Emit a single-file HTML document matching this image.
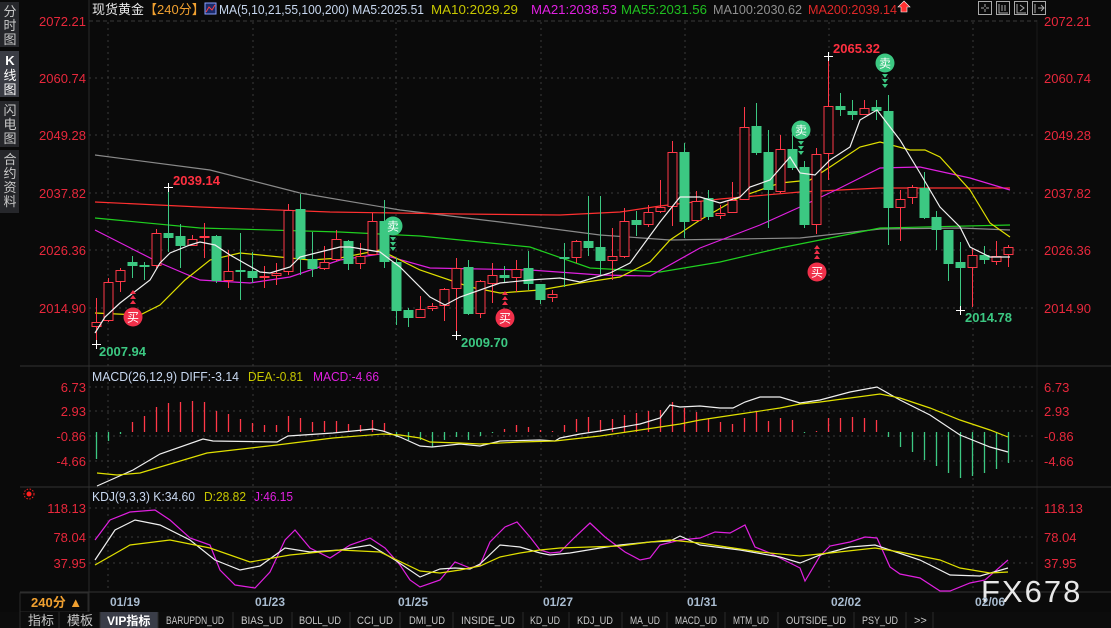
<!DOCTYPE html>
<html><head><meta charset="utf-8"><style>
html,body{margin:0;padding:0;background:#0a0a0a;width:1111px;height:628px;overflow:hidden}
svg{display:block}
text{font-family:"Liberation Sans","Noto Sans CJK SC",sans-serif}
.m{font-family:"Liberation Mono","Noto Sans CJK SC",monospace;font-size:11px;fill:#c8c8c8}
</style></head><body>
<svg id="s" width="1111" height="628" viewBox="0 0 1111 628" xmlns="http://www.w3.org/2000/svg">
<rect width="1111" height="628" fill="#0a0a0a"/>
<rect x="0" y="2" width="19" height="45" fill="#26272b"/>
<rect x="0" y="51" width="19" height="46" fill="#3a3c44"/>
<rect x="0" y="101" width="19" height="46" fill="#26272b"/>
<rect x="0" y="150" width="19" height="63" fill="#26272b"/>
<g font-size="13" fill="#c8c8c8" text-anchor="middle">
<text x="10" y="16">分</text><text x="10" y="30">时</text><text x="10" y="44">图</text>
<text x="10" y="65" fill="#fff" font-weight="bold">K</text><text x="10" y="80" fill="#fff">线</text><text x="10" y="94" fill="#fff">图</text>
<text x="10" y="115">闪</text><text x="10" y="129">电</text><text x="10" y="143">图</text>
<text x="10" y="164">合</text><text x="10" y="178">约</text><text x="10" y="192">资</text><text x="10" y="206">料</text>
</g>
<line x1="89" y1="0" x2="89" y2="612" stroke="#2a2a2a"/>
<line x1="1037" y1="20" x2="1037" y2="592" stroke="#1a1a1a"/>
<line x1="20" y1="366" x2="1111" y2="366" stroke="#333"/>
<line x1="20" y1="487" x2="1111" y2="487" stroke="#333"/>
<line x1="20" y1="592" x2="1111" y2="592" stroke="#333"/>
<g id="grid" stroke="#3a3a3a" stroke-dasharray="2,4"></g>
<line x1="89" y1="21" x2="1037" y2="21" stroke="#3a3a3a" stroke-dasharray="4,3"/>
<g font-size="13">
<text x="92" y="14" fill="#e8e8e8">现货黄金</text>
<text x="144" y="14" fill="#f0a030">【240分】</text>
<rect x="205" y="3" width="11" height="11" fill="#1a2a6a" stroke="#8aa0ff"/>
<polyline points="206,12 209,7 212,10 215,5" fill="none" stroke="#ff4040"/>
<text x="219" y="14" fill="#c8d8f0" textLength="205" lengthAdjust="spacingAndGlyphs">MA(5,10,21,55,100,200)  MA5:2025.51</text>
<text x="431" y="14" fill="#c8c800" textLength="87" lengthAdjust="spacingAndGlyphs">MA10:2029.29</text>
<text x="531" y="14" fill="#e020e0" textLength="86" lengthAdjust="spacingAndGlyphs">MA21:2038.53</text>
<text x="621" y="14" fill="#20c020" textLength="86" lengthAdjust="spacingAndGlyphs">MA55:2031.56</text>
<text x="713" y="14" fill="#909090" textLength="89" lengthAdjust="spacingAndGlyphs">MA100:2030.62</text>
<text x="808" y="14" fill="#e02828" textLength="89" lengthAdjust="spacingAndGlyphs">MA200:2039.14</text>
<path d="M904 1 L910 7 L907 7 L907 12 L901 12 L901 7 L898 7 Z" fill="#ff3030" stroke="#fff" stroke-width="0.6"/>
</g>
<g fill="none" stroke="#aaa">
<rect x="978.5" y="1.5" width="13" height="13"/><rect x="996.5" y="1.5" width="13" height="13"/><rect x="1014.5" y="1.5" width="13" height="13"/><rect x="1032.5" y="1.5" width="13" height="13"/>
<path d="M985 4v3M985 9v3M981 8h3M986 8h3M999 4v9h9M1002 5v6M1005 5v6M1017 4v9h9M1020 5l4 3-4 3M1035 4v9M1038 8h6M1041 5l3 3-3 3"/>
</g>
<g font-size="13" fill="#e8283c">
<g text-anchor="end">
<text x="86" y="26">2072.21</text><text x="86" y="83">2060.74</text><text x="86" y="140">2049.28</text><text x="86" y="198">2037.82</text><text x="86" y="255">2026.36</text><text x="86" y="313">2014.90</text>
<text x="86" y="392">6.73</text><text x="86" y="416">2.93</text><text x="86" y="441">-0.86</text><text x="86" y="466">-4.66</text>
<text x="86" y="513">118.13</text><text x="86" y="542">78.04</text><text x="86" y="568">37.95</text>
</g>
<text x="1044" y="26">2072.21</text><text x="1044" y="83">2060.74</text><text x="1044" y="140">2049.28</text><text x="1044" y="198">2037.82</text><text x="1044" y="255">2026.36</text><text x="1044" y="313">2014.90</text>
<text x="1044" y="392">6.73</text><text x="1044" y="416">2.93</text><text x="1044" y="441">-0.86</text><text x="1044" y="466">-4.66</text>
<text x="1044" y="513">118.13</text><text x="1044" y="542">78.04</text><text x="1044" y="568">37.95</text>
</g>
<g id="chart"></g>
<g font-size="13" font-weight="bold">
<text x="173" y="185" fill="#ff3040">2039.14</text>
<text x="99" y="356" fill="#3cc882">2007.94</text>
<text x="461" y="347" fill="#3cc882">2009.70</text>
<text x="833" y="53" fill="#ff3040">2065.32</text>
<text x="965" y="322" fill="#3cc882">2014.78</text>
</g>
<g id="sig"></g>
<g font-size="13">
<text x="92" y="381" fill="#c8d8f0" textLength="147" lengthAdjust="spacingAndGlyphs">MACD(26,12,9) DIFF:-3.14</text>
<text x="248" y="381" fill="#c8c800" textLength="55" lengthAdjust="spacingAndGlyphs">DEA:-0.81</text>
<text x="313" y="381" fill="#e020e0" textLength="66" lengthAdjust="spacingAndGlyphs">MACD:-4.66</text>
<text x="92" y="501" fill="#c8d8f0" textLength="103" lengthAdjust="spacingAndGlyphs">KDJ(9,3,3) K:34.60</text>
<text x="204" y="501" fill="#c8c800" textLength="42" lengthAdjust="spacingAndGlyphs">D:28.82</text>
<text x="254" y="501" fill="#e020e0" textLength="39" lengthAdjust="spacingAndGlyphs">J:46.15</text>
</g>
<circle cx="29" cy="494" r="2.5" fill="#ff2020"/>
<circle cx="29" cy="494" r="5" fill="none" stroke="#ff2020" stroke-dasharray="1.5,1.5"/>
<text x="981" y="602" font-size="31" fill="#e8e8e8" letter-spacing="2">FX678</text>
<rect x="20" y="593" width="68" height="19" fill="#0a0a0a" stroke="#2a2a2a"/>
<text x="31" y="607" font-size="13" font-weight="bold" fill="#f0a030">240分 ▲</text>
<g font-size="12" font-weight="bold" fill="#a9bcd0">
<text x="110" y="606">01/19</text><text x="255" y="606">01/23</text><text x="398" y="606">01/25</text><text x="543" y="606">01/27</text><text x="687" y="606">01/31</text><text x="831" y="606">02/02</text><text x="975" y="606">02/06</text>
</g>
<rect x="0" y="612" width="1111" height="16" fill="#0c0c0c"/>
<rect x="100" y="612" width="58" height="16" fill="#3a3d48"/>
<g stroke="#2a2a2a">
<path d="M20 612v16M59 612v16M100 612v16M158 612v16M233 612v16M292 612v16M350 612v16M400 612v16M453 612v16M523 612v16M569 612v16M622 612v16M667 612v16M725 612v16M778 612v16M854 612v16M906 612v16M933 612v16"/>
</g>
<g font-size="13" fill="#c8c8c8">
<text x="28" y="625">指标</text><text x="67" y="625">模板</text>
</g>
<text x="107" y="625" font-size="12" fill="#fff" font-weight="bold">VIP指标</text>
<g class="m">
<text x="166" y="624" textLength="58" lengthAdjust="spacingAndGlyphs">BARUPDN_UD</text>
<text x="241" y="624" textLength="42" lengthAdjust="spacingAndGlyphs">BIAS_UD</text>
<text x="299" y="624" textLength="42" lengthAdjust="spacingAndGlyphs">BOLL_UD</text>
<text x="357" y="624" textLength="36" lengthAdjust="spacingAndGlyphs">CCI_UD</text>
<text x="409" y="624" textLength="36" lengthAdjust="spacingAndGlyphs">DMI_UD</text>
<text x="461" y="624" textLength="54" lengthAdjust="spacingAndGlyphs">INSIDE_UD</text>
<text x="530" y="624" textLength="30" lengthAdjust="spacingAndGlyphs">KD_UD</text>
<text x="577" y="624" textLength="36" lengthAdjust="spacingAndGlyphs">KDJ_UD</text>
<text x="630" y="624" textLength="30" lengthAdjust="spacingAndGlyphs">MA_UD</text>
<text x="675" y="624" textLength="42" lengthAdjust="spacingAndGlyphs">MACD_UD</text>
<text x="733" y="624" textLength="36" lengthAdjust="spacingAndGlyphs">MTM_UD</text>
<text x="786" y="624" textLength="60" lengthAdjust="spacingAndGlyphs">OUTSIDE_UD</text>
<text x="862" y="624" textLength="36" lengthAdjust="spacingAndGlyphs">PSY_UD</text>
<text x="914" y="624">&gt;&gt;</text>
</g>
</svg>
<script>
var NS="http://www.w3.org/2000/svg";
function el(p,t,a){var e=document.createElementNS(NS,t);for(var k in a)e.setAttribute(k,a[k]);p.appendChild(e);return e;}
var g=document.getElementById('chart'),gr=document.getElementById('grid'),sg=document.getElementById('sig');
[78,135,193,250,308,387,411,436,461,508,537,563].forEach(function(y){el(gr,'line',{x1:89,y1:y,x2:1037,y2:y});});
[108,253,396,541,685,829,973].forEach(function(x){el(gr,'line',{x1:x,y1:22,x2:x,y2:592});});
function pl(pts,c){el(g,'polyline',{points:pts,fill:'none',stroke:c,'stroke-width':1.2});}
var R='#ff3848',G='#3cc882';
pl("95,155 210,170 300,193 400,210 500,222 600,235 670,240 800,238 880,229 960,228 1010,230",'#8a8a8a');
pl("95,202 200,207 330,212 460,214 560,215 620,212 660,206 720,199 800,192 880,188 1010,188",'#ff3030');
pl("95,218 200,228 340,232 420,236 530,247 590,268 660,272 720,262 780,248 880,228 1010,225",'#20d020');
pl("95,230 160,263 200,280 250,283 290,277 340,260 380,254 430,268 530,270 600,275 650,276 700,248 760,225 800,207 840,188 880,168 920,167 970,178 1010,190",'#e020e0');
pl("95,313 140,315 160,305 185,280 210,260 240,253 280,257 310,260 340,258 380,250 420,270 470,287 500,293 540,290 580,283 620,277 650,262 670,240 700,220 740,197 780,183 810,180 830,167 860,147 880,142 910,150 925,150 940,157 970,190 990,223 1010,237",'#e0e000');
var C=[[96,'r',322,326,298,344],[108,'r',282,320,278,322],[120,'r',270,281,268,292],[132,'g',262,265,256,278],[144,'g',265,266,262,280],[156,'r',233,265,229,268],[168,'g',233,237,187,252],[180,'g',236,245,224,268],[192,'r',239,245,235,245],[204,'r',236,237,223,258],[216,'g',236,280,235,283],[228,'r',271,280,250,288],[240,'g',270,271,233,300],[252,'g',271,277,252,283],[264,'r',276,277,266,288],[276,'r',273,275,263,285],[288,'r',210,271,204,275],[300,'g',209,258,194,275],[312,'g',259,268,232,277],[324,'r',262,268,246,270],[336,'r',239,259,230,261],[348,'g',241,263,240,270],[360,'r',256,263,243,269],[372,'r',221,254,213,255],[384,'g',221,261,200,268],[396,'g',262,310,258,325],[408,'g',310,317,308,327],[420,'r',309,317,296,317],[432,'r',306,308,303,311],[444,'r',289,305,288,321],[456,'r',268,288,258,335],[468,'g',267,313,260,315],[480,'r',281,313,280,318],[492,'r',275,283,263,303],[504,'g',275,277,266,283],[516,'r',269,277,260,292],[528,'g',268,283,251,290],[540,'g',284,299,284,304],[552,'r',294,297,290,302],[564,'g',257,258,243,287],[576,'r',241,257,240,263],[588,'g',241,247,196,256],[600,'g',247,260,196,275],[612,'r',256,260,228,280],[624,'r',221,256,208,258],[636,'g',220,224,211,236],[648,'r',212,224,205,227],[660,'r',207,211,180,213],[672,'r',152,206,141,226],[684,'g',152,221,143,238],[696,'r',201,220,191,221],[708,'g',198,216,190,220],[720,'r',213,215,205,219],[732,'r',200,212,182,213],[744,'r',127,199,107,200],[756,'g',126,152,103,155],[768,'g',152,189,130,228],[780,'r',149,191,135,193],[792,'g',149,167,130,170],[804,'g',167,224,161,228],[816,'r',154,224,148,234],[828,'r',106,153,56,180],[840,'g',106,109,93,116],[852,'g',111,114,100,120],[864,'r',108,114,100,114],[876,'g',107,110,100,120],[888,'g',111,207,95,245],[900,'r',199,207,190,241],[912,'r',187,197,185,204],[924,'g',188,217,172,219],[936,'g',217,229,211,250],[948,'g',230,263,230,281],[960,'g',262,267,242,310],[972,'r',255,267,249,307],[984,'g',255,259,246,264],[996,'r',256,261,241,265],[1008,'r',247,254,245,267]];
C.forEach(function(c){var x=c[0],col=c[1]=='r'?R:G,t=c[2],b=Math.max(c[3],c[2]+1);
el(g,'line',{x1:x+.5,y1:c[4],x2:x+.5,y2:t,stroke:col});el(g,'line',{x1:x+.5,y1:b,x2:x+.5,y2:c[5],stroke:col});
if(c[1]=='r')el(g,'rect',{x:x-4,y:t+.5,width:9,height:b-t,fill:'#0a0a0a',stroke:col});else el(g,'rect',{x:x-4.5,y:t,width:10,height:b-t+1,fill:col});});
pl("95,333 105,317 120,303 150,280 160,263 170,253 190,245 200,242 215,245 230,255 260,272 270,273 290,267 300,257 320,252 340,247 350,247 380,252 400,267 430,297 445,305 460,297 500,283 530,280 560,278 580,282 610,273 630,263 660,222 680,197 700,197 720,203 740,197 750,187 770,180 790,157 800,173 815,175 830,160 850,147 860,120 877,110 900,140 920,173 940,207 960,227 970,247 990,257 1010,257",'#f0f0f0');
[[168,187],[96,344],[456,335],[828,56],[960,310]].forEach(function(p){el(g,'path',{d:'M'+(p[0]-4)+' '+(p[1]+.5)+'h9M'+(p[0]+.5)+' '+(p[1]-4)+'v9',stroke:'#fff'});});
var M={96:-27,108:-9,120:-2,132:10,144:16,156:25,168:29,180:30,192:31,204:30,216:21,228:18,240:13,252:9,264:7,276:7,288:16,300:14,312:10,324:11,336:11,348:8,360:7,372:12,384:9,396:-5,408:-8,420:-8,432:-15,444:-8,456:-5,468:-8,480:-4,492:-1,504:3,516:7,528:5,540:2,552:1,564:7,576:13,588:15,600:12,612:13,624:17,636:19,648:21,660:22,672:30,684:24,696:20,708:14,720:10,732:8,744:14,756:20,768:11,780:14,792:12,804:-1,816:1,828:14,840:14,852:15,864:14,876:12,888:-5,900:-15,912:-20,924:-28,936:-34,948:-41,960:-46,972:-44,984:-41,996:-37,1008:-31};
for(var k in M){var v=M[k],x=+k+.5;el(g,'line',{x1:x,y1:432,x2:x,y2:432-v,stroke:v>0?R:G,'stroke-width':1.3});}
pl("97,486 133,470 160,454 203,439 213,441 277,442 288,436 333,433 373,429 383,431 400,437 420,446 432,447 460,444 480,446 500,441 540,440 555,441 560,438 580,434 600,431 640,424 660,418 670,405 680,407 700,406 720,408 733,408 745,402 760,397 780,397 800,403 820,400 850,392 877,387 900,400 930,415 960,435 990,447 1008,452",'#f0f0f0');
pl("97,473 117,475 140,473 207,453 277,445 333,438 383,434 400,435 420,438 430,442 460,443 480,444 520,442 555,441 600,436 640,430 680,424 700,420 740,414 780,408 800,404 820,402 850,398 880,394 900,398 930,408 960,420 990,430 1008,437",'#e0e000');
pl("95,540 110,520 130,512 155,510 170,520 190,538 210,545 220,570 235,585 255,588 270,572 285,540 295,530 310,548 330,558 350,545 370,538 385,548 400,565 410,580 420,587 440,580 455,562 470,568 480,565 490,542 505,527 517,522 530,537 540,550 550,553 560,552 575,537 590,523 605,537 613,543 625,552 640,560 650,558 660,545 680,540 700,538 715,532 730,533 745,525 755,547 770,553 800,568 805,581 820,556 830,546 850,542 865,537 877,538 890,567 900,574 920,578 940,591 950,591 970,583 985,580 1008,560",'#e020e0');
pl("95,560 115,530 135,520 160,525 190,540 215,560 240,570 260,566 285,548 310,552 340,550 370,545 395,560 420,577 440,569 455,568 470,569 480,564 500,545 520,547 540,553 550,555 570,553 600,548 620,545 650,542 670,541 680,536 700,545 740,550 780,557 800,563 820,555 850,547 875,545 890,550 920,560 950,575 980,576 1008,568",'#f0f0f0');
pl("95,565 130,545 170,540 210,548 250,562 290,555 340,550 380,552 420,571 440,573 460,570 480,566 500,557 520,553 540,550 560,548 590,547 620,546 650,542 670,540 700,543 760,552 800,556 830,553 875,548 900,552 940,560 960,568 990,573 1008,572",'#e0e000');
function sig(x,y,buy){var col=buy?'#f0304a':'#3cc882';
for(var i=0;i<3;i++){var ty=buy?y-13-i*5:y+11+i*5;
el(sg,'path',{d:buy?'M'+(x-3)+' '+(ty)+'L'+x+' '+(ty-4)+'L'+(x+3)+' '+ty+'Z':'M'+(x-3)+' '+ty+'L'+x+' '+(ty+4)+'L'+(x+3)+' '+ty+'Z',fill:col});}
el(sg,'circle',{cx:x,cy:y,r:9.5,fill:col});
var t=el(sg,'text',{x:x,y:y+4.5,'text-anchor':'middle','font-size':12,fill:'#fff'});t.textContent=buy?'买':'卖';}
sig(133,317,1);sig(505,318,1);sig(817,272,1);sig(393,226,0);sig(801,130,0);sig(885,63,0);
</script>
</body></html>
